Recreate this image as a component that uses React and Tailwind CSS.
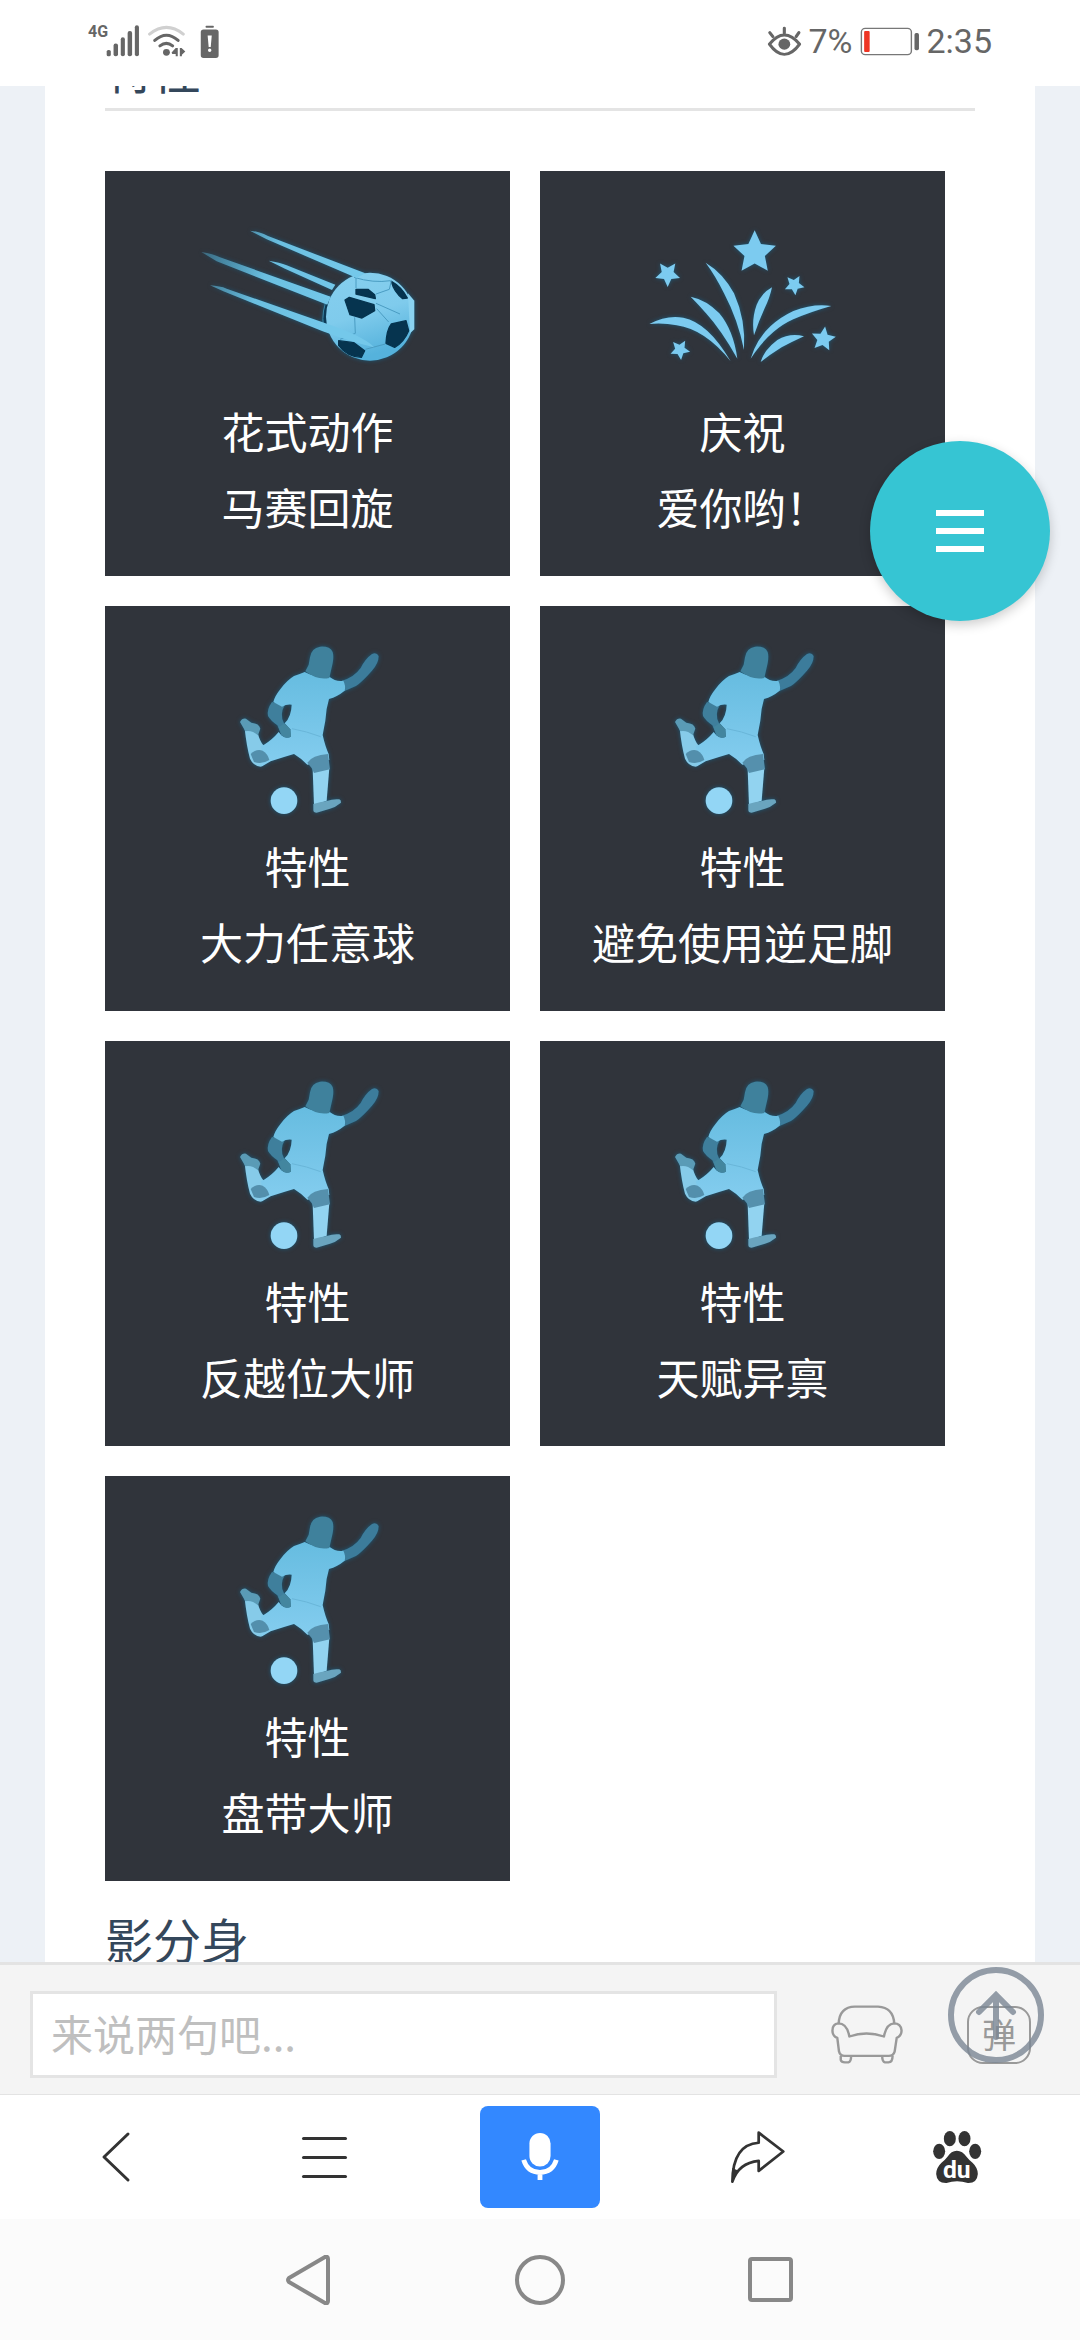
import React from "react";

const BALL_LINES = [
  "M450 212 Q480 214 504 228 L796 340 L770 354 L500 238 Z",
  "M304 276 Q340 282 360 292 L692 410 L682 434 L350 304 Z",
  "M506 302 Q540 307 560 316 L706 374 L696 390 L555 326 Z",
  "M330 376 Q360 378 380 386 L700 498 Q800 535 822 562 Q760 548 668 514 L370 394 Z",
];

function FlyingBall() {
  return (
    <svg viewBox="15 33 1215 672" className="w-full drop-shadow-[0_0_2px_#1b5a7a]" aria-hidden="true">
      <defs>
        <linearGradient id="trail" x1="300" y1="220" x2="720" y2="400" gradientUnits="userSpaceOnUse">
          <stop offset="0" stopColor="#4d9dbd" stopOpacity="0.4" />
          <stop offset="0.5" stopColor="#6bbfe0" />
          <stop offset="1" stopColor="#74c8ea" />
        </linearGradient>
        <linearGradient id="ball" x1="0" y1="0" x2="0.3" y2="1">
          <stop offset="0" stopColor="#86cfee" />
          <stop offset="0.55" stopColor="#7fcbec" />
          <stop offset="1" stopColor="#55b2dc" />
        </linearGradient>
        <clipPath id="ballClip">
          <circle cx="810" cy="470" r="132" />
        </clipPath>
      </defs>
      <path d="M684 412 Q664 450 670 500 L690 500 L690 412Z" fill="#0c3a56" stroke="#3c86a6" strokeWidth="3" />
      <circle cx="810" cy="470" r="132" fill="url(#ball)" />
      <g clipPath="url(#ballClip)">
        <g fill="#06344f" stroke="#06344f" strokeWidth="4" strokeLinejoin="round">
          <path d="M735 420 L748 412 L822 434 L824 452 L786 474 L750 464 Z" />
          <path d="M768 388 L804 388 L824 404 L826 416 L768 402 Z" />
          <path d="M874 364 Q904 380 922 414 L908 416 Q882 396 874 364 Z" />
          <path d="M874 492 L918 482 L926 512 Q912 546 884 562 L858 550 Q860 510 874 492 Z" />
          <path d="M716 542 L762 548 L794 572 L784 592 Q740 590 716 556 Z" />
        </g>
        <path
          d="M768 350 V384 M828 402 L868 388 M868 388 L874 362 M830 446 L866 486 M764 472 L766 520 M766 520 L720 538 M796 568 L856 552 M828 430 L900 462 M762 352 Q820 370 872 362"
          fill="none" stroke="#4a9cc2" strokeWidth="3"
        />
      </g>
      <path d="M924 400 L943 422 V508 L930 520 Z" fill="#8ad2f0" />
      {BALL_LINES.map((d) => <path key={d} d={d} fill="url(#trail)" />)}
    </svg>
  );
}

function starPoints(cx, cy, r, turn) {
  return Array.from({ length: 10 }, (_, i) => {
    const a = ((i * 36 - 90 + turn) * Math.PI) / 180;
    const q = i % 2 ? r * 0.48 : r;
    return `${(cx + q * Math.cos(a)).toFixed(1)},${(cy + q * Math.sin(a)).toFixed(1)}`;
  }).join(" ");
}

const STARS = [[674, 278, 67, 0], [413, 342, 39, 36], [793, 375, 31, 30], [880, 537, 38, 8], [450, 569, 31, 30]];
const SPARKS = [
  "M358 492 Q410 464 460 473 Q535 488 602 604 Q525 508 440 496 Q400 488 358 492Z",
  "M482 410 Q530 420 568 460 Q610 510 622 596 Q572 508 528 460 Q506 434 482 410Z",
  "M527 308 Q580 340 612 400 Q648 480 642 570 Q624 480 582 400 Q558 350 527 308Z",
  "M726 382 Q720 412 704 445 Q688 480 672 526 Q664 478 680 434 Q694 400 726 382Z",
  "M904 438 Q850 430 790 453 Q690 500 662 596 Q718 510 790 478 Q840 456 904 438Z",
  "M822 529 Q780 518 742 540 Q702 570 692 606 Q720 584 755 562 Q785 546 822 529Z",
];

function Fireworks() {
  return (
    <svg viewBox="30 33 1215 672" className="w-full drop-shadow-[0_0_2px_#1b5a7a]" aria-hidden="true">
      <g fill="#7ccbf0">
        {STARS.map(([x, y, r, t]) => <polygon key={x} points={starPoints(x, y, r, t)} />)}
        {SPARKS.map((d) => <path key={d} d={d} />)}
      </g>
    </svg>
  );
}

function Kicker() {
  return (
    <svg viewBox="15 18 1215 672" className="w-full drop-shadow-[0_0_2px_#1b5a7a]" aria-hidden="true">
      <defs>
        <linearGradient id="kit" x1="0" y1="0" x2="0" y2="1">
          <stop offset="0" stopColor="#66bce0" />
          <stop offset="1" stopColor="#84cdef" />
        </linearGradient>
      </defs>
      <path d="M726 242 Q762 232 782 204 Q796 176 816 162 Q830 156 836 168 Q836 190 816 212 Q786 246 768 258 L732 274Z" fill="#3c7c9b" />
      <path d="M516 306 Q500 328 504 348 Q512 362 532 376 L544 404 Q556 418 573 410 L572 388 L552 370 Q538 344 554 316Z" fill="#3f7f9c" />
      <path d="M434 386 Q456 376 474 402 Q480 424 490 436 L504 485 L482 500 Q460 498 450 476 Q440 440 434 386Z" fill="#86cbe9" />
      <path d="M638 508 L688 504 L680 602 L642 616Z" fill="#92d3f0" />
      <path d="M640 612 Q660 606 680 603 Q700 596 718 598 Q724 600 723 608 Q706 622 690 626 L650 638 Q640 638 640 630Z" fill="#6aa5bf" />
      <circle cx="552" cy="602" r="40" fill="#93d6f5" />
      <path
        d="M614 216 Q652 236 688 230 Q708 246 730 242 Q738 258 734 272 Q712 290 687 297 Q678 326 676 362 L668 405 Q676 440 686 462 L688 480 L622 494 Q602 474 582 462 Q548 472 512 484 L484 500 Q492 466 482 438 L492 434 Q516 420 536 396 L544 406 Q556 418 573 410 L571 388 L554 370 Q574 350 575 314 Q560 312 546 320 L520 306 Q524 288 542 266 Q562 240 582 228 Q600 222 614 216Z"
        fill="url(#kit)"
      />
      <path d="M630 172 Q634 144 660 140 Q690 138 698 156 Q702 168 698 190 L688 234 Q652 242 616 214 L626 194Z" fill="#3f819c" />
      <path d="M536 382 L544 404 Q556 418 573 410 L571 388 L553 370Z" fill="#43869f" />
      <path d="M576 386 Q620 394 662 410" fill="none" stroke="#69b6d9" strokeWidth="3" />
      <path d="M452 462 Q468 446 488 452 Q504 462 508 480 Q486 494 462 486Z" fill="#538fac" />
      <path d="M622 488 Q636 466 684 462 L690 508 L642 519 Q636 502 622 488Z" fill="#5590ad" />
      <path d="M420 366 Q426 354 438 356 L454 368 Q478 370 481 386 L474 406 Q456 390 436 394Z" fill="#5a9bb6" />
    </svg>
  );
}

const CARDS = [
  { Icon: FlyingBall, kind: "花式动作", name: "马赛回旋" },
  { Icon: Fireworks, kind: "庆祝", name: "爱你哟！" },
  { Icon: Kicker, kind: "特性", name: "大力任意球" },
  { Icon: Kicker, kind: "特性", name: "避免使用逆足脚" },
  { Icon: Kicker, kind: "特性", name: "反越位大师" },
  { Icon: Kicker, kind: "特性", name: "天赋异禀" },
  { Icon: Kicker, kind: "特性", name: "盘带大师" },
];

function StatusBar() {
  return (
    <header className="flex h-[86px] shrink-0 items-center justify-between bg-white px-[88px] pb-[4px] font-[Roboto,sans-serif] text-[#666]">
      <div className="flex items-center">
        <span className="-mr-[2px] self-start text-[16px] leading-4 font-bold">4G</span>
        <svg viewBox="308 70 332 104" preserveAspectRatio="none" className="h-[35px] w-[114px]" fill="#666" aria-hidden="true">
          <rect x="310" y="147" width="12" height="19" rx="5" />
          <rect x="330" y="128" width="13" height="38" rx="6" />
          <rect x="351" y="109" width="12" height="57" rx="6" />
          <rect x="371" y="91" width="13" height="75" rx="6" />
          <rect x="392" y="74" width="12" height="92" rx="6" />
          <g fill="none" strokeWidth="9" strokeLinecap="round">
            <path d="M435 100 Q484 60 533 100" stroke="#d0d0d0" />
            <path d="M450 119 Q484 88 518 119" stroke="#666" />
            <path d="M465 135 Q484 120 502 135" stroke="#666" />
          </g>
          <circle cx="484" cy="154" r="10" />
          <path d="M499 155 L511 141 H517 V166 H511 V159 H501Z M523 141 H528 L539 152 L529 161 V166 H523Z" />
          <rect x="598" y="75" width="24" height="6" rx="2" />
          <path fillRule="evenodd" d="M592 86 H628 Q636 86 636 94 V163 Q636 171 628 171 H592 Q584 171 584 163 V94 Q584 86 592 86Z M604 104 L607 138 H613 L616 104Z M610 143 A5 5 0 1 0 610 153 A5 5 0 1 0 610 143Z" />
        </svg>
      </div>
      <div className="flex items-center gap-[6px] text-[34px] leading-10">
        <svg viewBox="656 74 101 94" preserveAspectRatio="none" className="h-[31px] w-[35px]" fill="none" stroke="#666" strokeWidth="9" strokeLinecap="round" aria-hidden="true">
          <path d="M663 129 Q684 101 706 101 Q729 101 750 129 Q729 160 706 160 Q684 160 663 129Z" strokeLinejoin="round" />
          <circle cx="706" cy="129" r="17" fill="#666" stroke="none" />
          <path d="M706 81 V96 M664 94 L673 106 M748 94 L740 106" />
        </svg>
        <span>7%</span>
        <svg viewBox="924 78 174 86" preserveAspectRatio="none" className="ml-[2px] h-[29px] w-[60px]" aria-hidden="true">
          <rect x="928" y="82" width="145" height="78" rx="11" fill="none" stroke="#777" strokeWidth="4" />
          <rect x="936" y="90" width="16" height="62" rx="3" fill="#ee3524" />
          <rect x="1082" y="96" width="13" height="51" rx="5" fill="#666" />
        </svg>
        <span>2:35</span>
      </div>
    </header>
  );
}

function CommentBar() {
  return (
    <form className="relative flex h-[133px] shrink-0 items-center border-t-3 border-b border-[#e3e3e3] bg-[#f4f4f4] pt-[10px] pr-[49px] pl-[30px]" onSubmit={(e) => e.preventDefault()}>
      <input
        type="text"
        aria-label="来说两句吧"
        placeholder="来说两句吧..."
        className="h-[87px] min-w-0 flex-1 border-3 border-[#e4e4e4] bg-white px-[18px] pb-[4px] text-[42px] text-[#333] outline-none placeholder:text-[#bfbfbf]"
      />
      <button type="button" aria-label="沙发" className="ml-[52px]">
        <svg viewBox="840 400 220 188" preserveAspectRatio="none" className="h-[63px] w-[76px]" fill="none" stroke="#999" strokeWidth="7" strokeLinejoin="round" aria-hidden="true">
          <path d="M868 462 Q870 412 915 411 H982 Q1026 413 1029 462" />
          <path d="M899 500 Q892 461 867 461 Q850 463 850 482 Q850 499 864 504 L869 545 Q872 558 885 558 H1013 Q1026 558 1030 545 L1036 504 Q1050 498 1050 482 Q1048 461 1028 461 Q1006 463 999 500 Q948 482 899 500Z" />
          <path d="M874 558 V570 Q876 577 886 577 H896 Q904 575 904 558 M994 558 Q994 575 1002 577 H1012 Q1024 577 1024 558" />
        </svg>
      </button>
      <button type="button" className="ml-[62px] flex h-[58px] w-[64px] items-center justify-center rounded-2xl border-2 border-[#999] pb-[2px] text-[34px] leading-none text-[#999]">
        弹
      </button>
      <button type="button" aria-label="回到顶部" className="absolute top-[2px] right-[36px] opacity-80">
        <svg viewBox="0 0 96 96" className="size-[96px]" fill="none" stroke="#7b8795" strokeWidth="6" aria-hidden="true">
          <circle cx="48" cy="48" r="45" />
          <path d="M31 45 L48 28 L65 45 M48 29 V70" strokeLinecap="round" />
        </svg>
      </button>
    </form>
  );
}

function BrowserBar() {
  return (
    <nav aria-label="浏览器" className="grid h-[124px] shrink-0 grid-cols-5 items-center justify-items-center bg-white">
      <button type="button" aria-label="返回" className="pl-4">
        <svg viewBox="0 0 30 54" className="h-[54px] w-[30px]" fill="none" stroke="#333" strokeWidth="3" strokeLinecap="round" strokeLinejoin="round" aria-hidden="true">
          <path d="M27 4 L3 27 L27 50" />
        </svg>
      </button>
      <button type="button" aria-label="菜单" className="flex flex-col gap-4">
        <span className="h-[3px] w-[45px] rounded-full bg-[#333]" />
        <span className="h-[3px] w-[45px] rounded-full bg-[#333]" />
        <span className="h-[3px] w-[45px] rounded-full bg-[#333]" />
      </button>
      <button type="button" aria-label="语音搜索" className="flex h-[102px] w-[120px] items-center justify-center rounded-lg bg-[#3388ff]">
        <svg viewBox="0 0 40 52" className="h-[50px] w-[40px]" aria-hidden="true">
          <rect x="9" y="1" width="22" height="35" rx="11" fill="#fff" />
          <path d="M3 29 Q7 42 20 42 Q33 42 37 29 M20 42 V50" fill="none" stroke="#fff" strokeWidth="5" />
        </svg>
      </button>
      <button type="button" aria-label="分享" className="pl-1">
        <svg viewBox="550 122 164 164" preserveAspectRatio="none" className="h-[55px] w-[56px]" fill="none" stroke="#333" strokeWidth="8" strokeLinejoin="round" aria-hidden="true">
          <path d="M634 130 L706 186 L634 244 V214 Q575 220 557 276 Q558 165 634 160Z" />
          <path d="M557 280 L556 235 L572 242Z" fill="#333" stroke="none" />
        </svg>
      </button>
      <button type="button" aria-label="百度" className="pr-[30px]">
        <svg viewBox="1134 120 151 162" className="h-[54px] w-[52px]" fill="#333" aria-hidden="true">
          <ellipse cx="1156" cy="184" rx="18" ry="23" />
          <ellipse cx="1188" cy="146" rx="18" ry="23" />
          <ellipse cx="1232" cy="146" rx="18" ry="23" />
          <ellipse cx="1264" cy="184" rx="18" ry="23" />
          <path d="M1209 182 Q1226 182 1238 200 Q1244 208 1256 218 Q1272 233 1272 252 Q1270 280 1242 279 Q1209 269 1178 279 Q1149 280 1147 252 Q1147 233 1163 218 Q1175 208 1181 200 Q1192 182 1209 182Z" />
          <text x="1209" y="264" textAnchor="middle" fontFamily="Roboto, sans-serif" fontSize="74" fontWeight="700" fill="#fff">du</text>
        </svg>
      </button>
    </nav>
  );
}

function SystemBar() {
  return (
    <nav aria-label="系统" className="flex h-[121px] shrink-0 items-center justify-center gap-[180px] bg-[#fbfbfb]">
      <button type="button" aria-label="后退">
        <svg viewBox="0 0 50 50" className="size-[50px]" fill="none" stroke="#888" strokeWidth="4" strokeLinejoin="round" aria-hidden="true">
          <path d="M4 23 Q2 25 4 27 L40 48 Q43 49 43 46 V4 Q43 1 40 2Z" />
        </svg>
      </button>
      <button type="button" aria-label="主屏幕" className="size-[50px] rounded-full border-4 border-[#888]" />
      <button type="button" aria-label="最近任务" className="flex size-[50px] items-center justify-center">
        <span className="size-[45px] rounded-sm border-4 border-[#888]" />
      </button>
    </nav>
  );
}

export default function App() {
  return (
    <div className="relative flex h-screen flex-col overflow-hidden bg-white font-['Noto_Sans_CJK_SC',sans-serif]">
      <StatusBar />
      <main className="min-h-0 flex-1 overflow-hidden bg-[#edf1f6] px-[45px]">
        <div className="min-h-full bg-white px-[60px]">
          <div className="flex h-[25px] items-end overflow-hidden border-b-3 border-[#e4e4e4]">
            <h2 className="text-[48px] leading-[80px] text-[#34475b]">特性</h2>
          </div>
          <ul className="mt-[60px] grid grid-cols-2 gap-[30px] pr-[30px]">
            {CARDS.map(({ Icon, kind, name }) => (
              <li key={name} className="aspect-square bg-[#30343b] text-center text-[43px] leading-[76px] text-white">
                <Icon />
                <p className="-mt-[3px]">{kind}</p>
                <p className="whitespace-nowrap">{name}</p>
              </li>
            ))}
          </ul>
          <h2 className="mt-[27px] text-[48px] leading-[60px] text-[#34475b]">影分身</h2>
        </div>
      </main>
      <CommentBar />
      <BrowserBar />
      <SystemBar />
      <button type="button" aria-label="打开菜单" className="absolute top-[441px] right-[30px] flex size-[180px] flex-col items-center justify-center gap-3 rounded-full bg-[#36c5d3] shadow-[0_4px_12px_rgba(0,0,0,0.2)]">
        <span className="h-[6px] w-12 bg-white" />
        <span className="h-[6px] w-12 bg-white" />
        <span className="h-[6px] w-12 bg-white" />
      </button>
    </div>
  );
}
